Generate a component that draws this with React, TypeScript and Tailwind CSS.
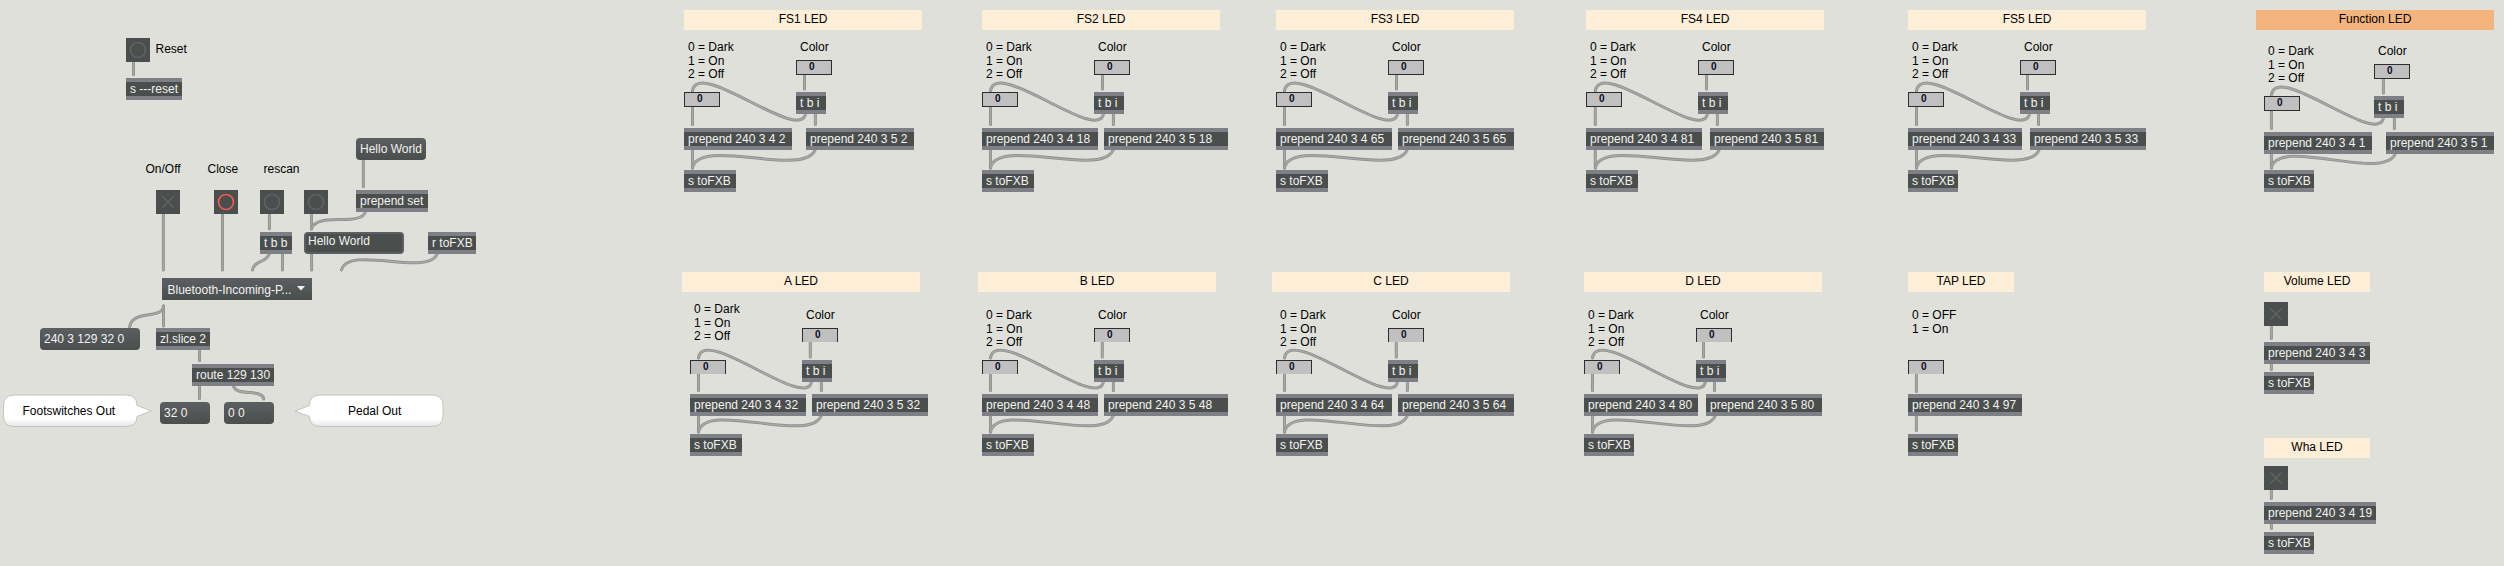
import React from "react";

type Port = { x: number; live?: boolean };

const live = (...xs: number[]): Port[] => xs.map((x) => ({ x, live: true }));

function Text({ x, y, children, className = "text-black" }: { x: number; y: number; children: React.ReactNode; className?: string }) {
  return (
    <span className={`absolute whitespace-pre text-[12px] leading-[14px] ${className}`} style={{ left: x, top: y - 11 }}>
      {children}
    </span>
  );
}

function Ports({ ports, side }: { ports: Port[]; side: "in" | "out" }) {
  return (
    <>
      {ports.map((p) => (
        <circle
          key={p.x}
          cx={p.x}
          cy={side === "in" ? 0 : 22}
          r={p.live ? 3 : 3.6}
          fill={p.live ? "#444745" : "#bdbdc2"}
          stroke={p.live ? (side === "in" ? "#eda893" : "#c3cb55") : "none"}
          strokeWidth="1"
        />
      ))}
    </>
  );
}

function Obj({ x, y, w, text, ins = [], outs = [] }: { x: number; y: number; w: number; text: string; ins?: Port[]; outs?: Port[] }) {
  return (
    <div className="absolute h-[22px] overflow-hidden border-y-4 border-[#7f8087] bg-[#4a4e4c]" style={{ left: x, top: y, width: w }}>
      <svg className="absolute -top-1 left-0" width={w} height="22">
        <Ports ports={ins} side="in" />
        <Ports ports={outs} side="out" />
      </svg>
      <span className="relative block whitespace-pre pl-1 text-[12px] leading-[14px] text-[#f2f2f2]">{text}</span>
    </div>
  );
}

function Message({ x, y, w, text }: { x: number; y: number; w: number; text: string }) {
  return (
    <div
      className="absolute flex h-[22px] items-center whitespace-pre rounded-[4px] bg-gradient-to-b from-[#5b5f62] to-[#4a4e4c] pl-1 text-[12px] leading-[14px] text-[#f2f2f2]"
      style={{ left: x, top: y, width: w }}
    >
      {text}
    </div>
  );
}

function Bang({ x, y, on }: { x: number; y: number; on?: boolean }) {
  return (
    <svg className="absolute bg-[#4a4e4c]" style={{ left: x, top: y }} width="24" height="24">
      <circle cx="12" cy="12" r="7.5" fill="none" stroke={on ? "#ee5b50" : "#606166"} strokeWidth="1.7" />
    </svg>
  );
}

function Toggle({ x, y }: { x: number; y: number }) {
  return (
    <svg className="absolute bg-[#4a4e4c]" style={{ left: x, top: y }} width="24" height="24">
      <path d="M6.5 6.5 L17.5 17.5 M17.5 6.5 L6.5 17.5" stroke="#606166" strokeWidth="1.6" />
    </svg>
  );
}

function NumberBox({ x, y, open }: { x: number; y: number; open?: boolean }) {
  return (
    <div
      className={`absolute w-[36px] border border-[#2d2d2d] bg-[#c0c0c0] pl-[12px] text-[10px] font-bold leading-[12px] text-[#0b0b20] ${open ? "h-[14px] border-b-0" : "h-[15px]"}`}
      style={{ left: x, top: y }}
    >
      0
    </div>
  );
}

function Title({ x, y, w, text, strong }: { x: number; y: number; w: number; text: string; strong?: boolean }) {
  return (
    <div
      className={`absolute h-5 pt-[2px] text-center text-[12px] leading-[14px] text-black ${strong ? "bg-[#f4b47d]" : "bg-[#fdeed7]"}`}
      style={{ left: x, top: y, width: w }}
    >
      {text}
    </div>
  );
}

function Wire({ d }: { d: string }) {
  return (
    <>
      <path d={d} fill="none" stroke="#8f8f8e" strokeWidth="3" strokeLinecap="round" />
      <path d={d} fill="none" stroke="#a8a8a7" strokeWidth="1.4" strokeLinecap="round" />
    </>
  );
}

type Group = {
  name: string;
  titleX: number;
  titleY: number;
  strong?: boolean;
  x: number;
  y: number;
  labelX: number;
  labelY: number;
  colorX: number;
  colorLabelY: number;
  open?: boolean;
  a: string;
  aw: number;
  b: string;
  bx: number;
  bw: number;
  sendY: number;
  sendW: number;
  w1: number;
  w2: number;
  w3: number;
};

const top = { titleY: 10, y: 92, labelY: 51, colorLabelY: 51, sendY: 170, w1: 8.5, w2: 8.5, w3: 19.4 };
const bottom = { titleY: 272, y: 360, labelY: 319, colorLabelY: 319, sendY: 434, open: true, w1: 8.5, w2: 8.3, w3: 19.4 };

const groups: Group[] = [
  { ...top, name: "FS1 LED", titleX: 684, x: 684, labelX: 688, colorX: 796, a: "2", aw: 108, b: "2", bx: 806, bw: 108, sendW: 52 },
  { ...top, name: "FS2 LED", titleX: 982, x: 982, labelX: 986, colorX: 1094, a: "18", aw: 116, b: "18", bx: 1104, bw: 124, sendW: 52 },
  { ...top, name: "FS3 LED", titleX: 1276, x: 1276, labelX: 1280, colorX: 1388, a: "65", aw: 116, b: "65", bx: 1398, bw: 116, sendW: 52 },
  { ...top, name: "FS4 LED", titleX: 1586, x: 1586, labelX: 1590, colorX: 1698, a: "81", aw: 116, b: "81", bx: 1710, bw: 114, sendW: 52, w1: 9.3 },
  { ...top, name: "FS5 LED", titleX: 1908, x: 1908, labelX: 1912, colorX: 2020, a: "33", aw: 114, b: "33", bx: 2030, bw: 116, sendW: 50, w2: 7.5, w3: 18.5 },
  { ...top, name: "Function LED", strong: true, titleX: 2256, y: 96, labelY: 55, colorLabelY: 55, x: 2264, labelX: 2268, colorX: 2374, a: "1", aw: 108, b: "1", bx: 2386, bw: 108, sendW: 50, w1: 7.4, w2: 9.4, w3: 20.4 },
  { ...bottom, name: "A LED", titleX: 682, labelY: 313, x: 690, labelX: 694, colorX: 802, a: "32", aw: 116, b: "32", bx: 812, bw: 116, sendW: 52 },
  { ...bottom, name: "B LED", titleX: 978, x: 982, labelX: 986, colorX: 1094, a: "48", aw: 116, b: "48", bx: 1104, bw: 124, sendW: 52 },
  { ...bottom, name: "C LED", titleX: 1272, x: 1276, labelX: 1280, colorX: 1388, a: "64", aw: 116, b: "64", bx: 1398, bw: 116, sendW: 52 },
  { ...bottom, name: "D LED", titleX: 1584, x: 1584, labelX: 1588, colorX: 1696, a: "80", aw: 114, b: "80", bx: 1706, bw: 116, sendW: 50, w2: 7.5, w3: 18.5 },
];

const prependY = (g: Group) => g.y + (g.open ? 34 : 36);

function groupWires(g: Group): string[] {
  const py = prependY(g);
  const x1 = g.x + g.w1;
  const o1 = g.colorX + 9.6;
  const o2 = g.bx + 9.5;
  const ey = g.open ? g.y - 2 : g.y - 1;
  return [
    `M${g.colorX + g.w2} ${g.y - 18} V${g.y - 3}`,
    `M${x1} ${g.y + 14} V${py - 3.5}`,
    `M${g.colorX + g.w3} ${g.y + 21} V${py - 3.5}`,
    `M${o1} ${g.y + 21} C${o1 - 4} ${g.y + 53} ${x1 + 5} ${ey - 34} ${x1} ${ey}`,
    `M${x1} ${py + 21} V${g.sendY - 2}`,
    `M${o2} ${py + 21} C${o2 - 10} ${py + 51} ${x1 + 6} ${g.sendY - 34} ${x1} ${g.sendY - 2}`,
  ];
}

function Legend({ x, y, lines }: { x: number; y: number; lines: string[] }) {
  return (
    <>
      {lines.map((line, i) => (
        <Text key={line} x={x} y={y + [0, 14, 27][i]}>
          {line}
        </Text>
      ))}
    </>
  );
}

function LedGroup({ g }: { g: Group }) {
  const py = prependY(g);
  return (
    <>
      <Title x={g.titleX} y={g.titleY} w={238} text={g.name} strong={g.strong} />
      <Legend x={g.labelX} y={g.labelY} lines={["0 = Dark", "1 = On", "2 = Off"]} />
      <Text x={g.colorX + 4} y={g.colorLabelY}>Color</Text>
      <NumberBox x={g.colorX} y={g.y - 32} open={g.open} />
      <NumberBox x={g.x} y={g.y} open={g.open} />
      <Obj x={g.colorX} y={g.y} w={30} text="t b i" ins={live(9.5)} outs={live(9.5, 20.8)} />
      <Obj x={g.x} y={py} w={g.aw} text={`prepend 240 3 4 ${g.a}`} ins={live(9.5)} outs={live(9.5)} />
      <Obj x={g.bx} y={py} w={g.bw} text={`prepend 240 3 5 ${g.b}`} ins={live(9.5)} outs={live(9.5)} />
      <Obj x={g.x} y={g.sendY} w={g.sendW} text="s toFXB" ins={live(9.5)} />
    </>
  );
}

const wires: string[] = [
  "M133.5 60 V74.5",
  "M363.4 158 V186.5",
  "M163.4 212 V270",
  "M222.5 212 V270",
  "M269.4 212 V228.7",
  "M311.5 212 V229",
  "M365.7 211 C362 228 316 211 311.5 229",
  "M269.6 253 C267 263 254.5 260 252.4 270",
  "M282.5 252 V270",
  "M311.6 252 V270",
  "M437.6 253 C430 278 348 244 341.5 270",
  "M163.5 306 V326",
  "M163.5 306 C162.5 320 131 309 129.4 328",
  "M199.5 348 V360.5",
  "M199.5 384 V398.5",
  "M233.3 385 C235 397.5 262 388 263.7 399",
  "M1916.4 372 V391.5",
  "M1916.4 414 V430.5",
  "M2271.4 324 V338.5",
  "M2271.4 362 V369.5",
  "M2271.4 488 V498.5",
  "M2271.4 522 V528.5",
];

export default function App() {
  return (
    <main className="relative h-[566px] w-[2504px] overflow-hidden bg-[#dfe0da] font-['Liberation_Sans',Arial,sans-serif]">
      <svg className="absolute left-0 top-0" width="2504" height="566">
        <defs>
          <linearGradient id="bubble" x1="0" y1="0" x2="0" y2="1">
            <stop offset="0" stopColor="#fff" />
            <stop offset="0.75" stopColor="#fff" />
            <stop offset="1" stopColor="#e6e6e6" />
          </linearGradient>
        </defs>
        {[...wires, ...groups.flatMap(groupWires)].map((d, i) => (
          <Wire key={i} d={d} />
        ))}
        <path
          d="M14 395 H126 Q137 395 137 405.5 L151.5 411 L137 416.5 Q137 426.5 126 426.5 H14 Q3.5 426.5 3.5 416 V405.5 Q3.5 395 14 395 Z"
          fill="url(#bubble)"
          stroke="#c3c4c0"
        />
        <path
          d="M320 395 H432 Q443 395 443 405.5 V416 Q443 426.5 432 426.5 H320 Q309.5 426.5 309.5 416.5 L295 411 L309.5 405.5 Q309.5 395 320 395 Z"
          fill="url(#bubble)"
          stroke="#c3c4c0"
        />
      </svg>

      <Bang x={126} y={38} />
      <Text x={155.5} y={53}>Reset</Text>
      <Obj x={126} y={78} w={56} text="s ---reset" ins={live(9.5)} />

      <Message x={356} y={138} w={70} text="Hello World" />
      <Text x={145.5} y={173}>On/Off</Text>
      <Text x={207.5} y={173}>Close</Text>
      <Text x={263.5} y={173}>rescan</Text>
      <Toggle x={156} y={190} />
      <Bang x={214} y={190} on />
      <Bang x={260} y={190} />
      <Bang x={304} y={190} />
      <Obj x={356} y={190} w={72} text="prepend set" ins={live(9.5)} outs={live(9.5)} />
      <Obj x={260} y={232} w={32} text="t b b" ins={live(9.5)} outs={live(9.5, 22.5)} />
      <div className="absolute left-[304px] top-[232px] h-[22px] w-[100px] rounded-[4px] border-2 border-[#5c5f62] bg-[#4a4e4c] pl-[2px] text-[12px] leading-[14px] text-[#f2f2f2]">
        Hello World
      </div>
      <Obj x={428} y={232} w={48} text="r toFXB" outs={live(9.5)} />

      <div className="absolute left-[162px] top-[278px] flex h-[22px] w-[150px] items-center justify-between bg-gradient-to-b from-[#5b5f62] to-[#4a4e4c] pl-[5.5px] pr-[7px] pt-px text-[12px] leading-[14px] text-[#f2f2f2]">
        <span>Bluetooth-Incoming-P...</span>
        <svg width="8" height="5" className="-mt-[2px]">
          <path d="M0 0 H8 L4 4.6 Z" fill="#f2f2f2" />
        </svg>
      </div>

      <Message x={40} y={328} w={100} text="240 3 129 32 0" />
      <Obj x={156} y={328} w={54} text="zl.slice 2" ins={[{ x: 9.5, live: true }, { x: 45.5 }]} outs={[{ x: 9.5 }, { x: 45.5, live: true }]} />
      <Obj
        x={192}
        y={364}
        w={82}
        text="route 129 130"
        ins={[{ x: 9.5, live: true }, { x: 41.5 }, { x: 73.5 }]}
        outs={[{ x: 9.5, live: true }, { x: 41.5, live: true }, { x: 73.5 }]}
      />
      <Message x={160} y={402} w={50} text="32 0" />
      <Message x={224} y={402} w={50} text="0 0" />
      <Text x={22.5} y={415}>Footswitches Out</Text>
      <Text x={348} y={415}>Pedal Out</Text>

      {groups.map((g) => (
        <LedGroup key={g.name} g={g} />
      ))}

      <Title x={1908} y={272} w={106} text="TAP LED" />
      <Legend x={1912} y={319} lines={["0 = OFF", "1 = On"]} />
      <NumberBox x={1908} y={360} open />
      <Obj x={1908} y={394} w={114} text="prepend 240 3 4 97" ins={live(9.5)} outs={live(9.5)} />
      <Obj x={1908} y={434} w={50} text="s toFXB" ins={live(9.5)} />

      <Title x={2264} y={272} w={106} text="Volume LED" />
      <Toggle x={2264} y={302} />
      <Obj x={2264} y={342} w={106} text="prepend 240 3 4 3" ins={live(9.5)} outs={live(9.5)} />
      <Obj x={2264} y={372} w={50} text="s toFXB" ins={live(9.5)} />

      <Title x={2264} y={438} w={106} text="Wha LED" />
      <Toggle x={2264} y={466} />
      <Obj x={2264} y={502} w={112} text="prepend 240 3 4 19" ins={live(9.5)} outs={live(9.5)} />
      <Obj x={2264} y={532} w={50} text="s toFXB" ins={live(9.5)} />
    </main>
  );
}
